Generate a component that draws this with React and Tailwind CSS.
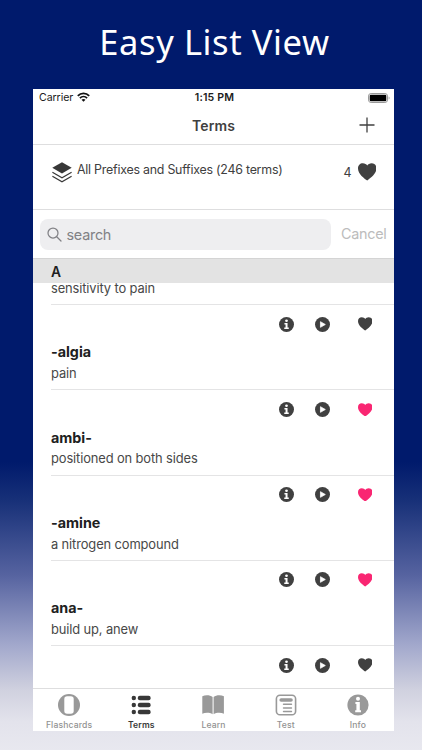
import React from "react";

const terms = [
  { term: "-algia", definition: "pain", favorite: false },
  { term: "ambi-", definition: "positioned on both sides", favorite: true },
  { term: "-amine", definition: "a nitrogen compound", favorite: true },
  { term: "ana-", definition: "build up, anew", favorite: true },
];

function Heart({ className }) {
  return (
    <svg viewBox="0 0 20 20" className={className} fill="currentColor" preserveAspectRatio="none">
      <path d="M10 20C7 17.8 0 12.5 0 6.2C0 2.6 2.2 .3 5.2 .3C7.5 .3 9 1.4 10 2.8C11 1.4 12.5 .3 14.8 .3C17.8 .3 20 2.6 20 6.2C20 12.5 13 17.8 10 20Z" />
    </svg>
  );
}

function InfoDot() {
  return (
    <svg viewBox="0 0 16 16" className="size-[15px]">
      <circle cx="8" cy="8" r="8" fill="#404040" />
      <circle cx="8" cy="4" r="1.45" fill="#fff" />
      <path d="M5.8 6.5H9.1V11.2H10.4V12.8H5.6V11.2H7V8H5.8Z" fill="#fff" />
    </svg>
  );
}

function PlayDot() {
  return (
    <svg viewBox="0 0 16 16" className="size-[15px]">
      <circle cx="8" cy="8" r="8" fill="#404040" />
      <path d="M5.8 5L11 8L5.8 11Z" fill="#fff" stroke="#fff" strokeWidth=".8" strokeLinejoin="round" />
    </svg>
  );
}

function Actions({ favorite }) {
  return (
    <div className="flex h-[38px] items-center justify-end pr-[22px]">
      <InfoDot />
      <span className="ml-[21.5px] flex"><PlayDot /></span>
      <span className={favorite ? "ml-[27.5px] flex text-[#f92672]" : "ml-[27.5px] flex text-[#404040]"}>
        <Heart className="h-[13.5px] w-[14.5px]" />
      </span>
    </div>
  );
}

function TermRow({ term, definition, favorite }) {
  return (
    <div className="ml-[18px] h-[85.25px] border-b border-[#e4e4e5]">
      <Actions favorite={favorite} />
      <div className="-mt-[0.7px] h-[20px] text-[14.3px] leading-[20px] font-bold text-[#202020]">{term}</div>
      <div className="mt-[1.8px] text-[12.9px] leading-[20px] tracking-[-0.12px] text-[#484848]">{definition}</div>
    </div>
  );
}

const tabs = [
  {
    label: "Flashcards",
    icon: (
      <>
        <circle cx="12" cy="12" r="11" fill="#999" />
        <rect x="7.3" y="3.2" width="9.4" height="17.6" rx="2.8" fill="#fff" />
      </>
    ),
  },
  {
    label: "Terms",
    active: true,
    icon: (
      <g fill="#383838">
        {[5, 12, 19].map((y) => (
          <g key={y}>
            <circle cx="4.8" cy={y} r="2.2" />
            <rect x="8.8" y={y - 2.3} width="12.8" height="4.6" rx="2" />
          </g>
        ))}
      </g>
    ),
  },
  {
    label: "Learn",
    icon: (
      <g fill="#999">
        <path d="M11.6 4.1C9 1.8 4.2 1.8 1.3 3.3V20.7C4.2 19.5 8.8 19.4 11.6 21.3Z" />
        <path d="M12.6 4.1C15.2 1.8 20 1.8 22.9 3.3V20.7C20 19.5 15.4 19.4 12.6 21.3Z" />
      </g>
    ),
  },
  {
    label: "Test",
    icon: (
      <g fill="none" stroke="#999" strokeLinecap="round">
        <rect x="2.4" y="2.2" width="19.2" height="19.6" rx="3.6" strokeWidth="1.6" />
        <path d="M7.2 7H17" strokeWidth="3.6" />
        <path d="M9.5 11.2H17.5M9.5 15H17.5M9.5 18.5H17.5" strokeWidth="1.4" />
      </g>
    ),
  },
  {
    label: "Info",
    icon: (
      <>
        <circle cx="12" cy="12" r="10.6" fill="#999" />
        <circle cx="12" cy="5.7" r="2" fill="#fff" />
        <path d="M9.4 9.1H13.8V17.3H15V19.2H9.2V17.3H10.4V10.9H9.4Z" fill="#fff" />
      </>
    ),
  },
];

export default function App() {
  return (
    <main className="flex h-[750px] w-[422px] flex-col items-center overflow-hidden bg-[linear-gradient(to_bottom,#001a6c_0px,#001a6c_462px,#173078_500px,#5663a0_575px,#a2a8cc_645px,#d0d1df_690px,#e3e3ec_722px,#e8e8ef_750px)] font-['Inter','Liberation_Sans',sans-serif]">
      <h1 className="h-[88.5px] shrink-0 pt-[18.5px] pl-[7px] font-['Noto_Sans',sans-serif] text-[34.5px] leading-[46px] font-normal tracking-[0.6px] whitespace-nowrap text-white">
        Easy List View
      </h1>

      <section className="ml-[5px] flex h-[642.5px] w-[361px] shrink-0 flex-col overflow-hidden bg-white">
        <div className="grid h-[18px] shrink-0 grid-cols-3 items-center pr-[4px] pl-[6px] text-[11px] text-[#202020]">
          <div className="flex items-center gap-[4px]">
            <span className="pt-[1px] text-[10.6px] tracking-[-0.08px]">Carrier</span>
            <svg viewBox="0 0 13 10" className="h-[10px] w-[13px]" fill="none" stroke="#111" strokeWidth="1.8">
              <path d="M.8 3.8C4 .5 9 .5 12.2 3.8M2.9 6.1C5 4.1 8 4.1 10.1 6.1" />
              <path d="M4.5 7.7C5.7 6.7 7.3 6.7 8.5 7.7L6.5 9.8Z" fill="#111" stroke="none" />
            </svg>
          </div>
          <div className="pt-[1px] text-center text-[10.6px] font-semibold tracking-[0.15px]">1:15 PM</div>
          <svg viewBox="0 0 22 10" className="h-[10px] w-[22px] justify-self-end">
            <rect x=".5" y=".5" width="19" height="9" rx="2.6" fill="none" stroke="#999" />
            <rect x="1.7" y="1.7" width="16.6" height="6.6" rx="1.2" fill="#000" />
            <path d="M20.7 3.5C21.8 4 21.8 6 20.7 6.5Z" fill="#999" />
          </svg>
        </div>

        <header className="grid h-[38px] shrink-0 grid-cols-[1fr_auto_1fr] items-center border-b border-[#dededf] pr-[19px] pl-[19px]">
          <span />
          <h2 className="text-[14px] font-semibold tracking-[0.1px] text-[#404040]">Terms</h2>
          <svg viewBox="0 0 16 16" className="size-[16px] justify-self-end" stroke="#404040" strokeWidth="1.3">
            <path d="M8 .5V15.5M.5 8H15.5" />
          </svg>
        </header>

        <div className="flex h-[65.5px] shrink-0 items-start border-b border-[#dededf] pr-[18px] pl-[19px] text-[#404040]">
          <svg viewBox="0 0 20 21" className="mt-[17.5px] h-[21px] w-[20px]">
            <path d="M10 .3L19.7 5.8L10 11.5L.3 5.8Z" fill="#383838" />
            <path d="M.4 10.3L10 15.8L19.6 10.3M.4 14.2L10 19.8L19.6 14.2" fill="none" stroke="#383838" strokeWidth="1.2" />
          </svg>
          <span className="mt-[16px] ml-[5px] text-[12.4px] leading-[18px] tracking-[-0.23px] whitespace-nowrap">All Prefixes and Suffixes (246 terms)</span>
          <span className="mt-[19px] ml-auto text-[12.5px] leading-[18px]">4</span>
          <span className="mt-[18.5px] ml-[6px]"><Heart className="h-[17.5px] w-[18.5px]" /></span>
        </div>

        <div className="flex h-[48px] shrink-0 items-center pr-[7.5px] pl-[7px]">
          <div className="flex h-[31px] w-[291px] items-center rounded-[8px] bg-[#eeeef0] pl-[7px] text-[#818185]">
            <svg viewBox="0 0 15 15" className="size-[15px]" fill="none" stroke="currentColor" strokeWidth="1.25" strokeLinecap="round">
              <circle cx="6" cy="6" r="5" />
              <path d="M9.7 9.7L14 14" />
            </svg>
            <span className="ml-[4.5px] pt-[1px] text-[14.4px] tracking-[-0.25px]">search</span>
          </div>
          <span className="ml-auto text-[14.4px] tracking-[-0.28px] text-[#bcbcbc]">Cancel</span>
        </div>

        <div className="relative z-10 h-[25px] shrink-0 border-t border-[#d4d4d4] bg-[#e3e3e3] pl-[18px] text-[13.8px] leading-[26px] font-semibold text-[#202020]">A</div>

        <div className="h-[405px] shrink-0">
          <div className="ml-[18px] h-[22px] border-b border-[#e4e4e5] text-[12.9px] leading-[12px] tracking-[-0.12px] text-[#484848]">sensitivity to pain</div>
          {terms.map((item) => <TermRow key={item.term} {...item} />)}
          <Actions favorite={false} />
        </div>

        <nav className="grid h-[43px] shrink-0 grid-cols-5 border-t border-[#dededf]">
          {tabs.map(({ label, active, icon }) => (
            <div key={label} className="flex flex-col items-center pt-[4px]">
              <svg viewBox="0 0 24 24" className="size-[24px]">{icon}</svg>
              <span className={active ? "mt-[2.5px] text-[8.6px] leading-[11px] font-semibold tracking-[0.1px] text-[#383838]" : "mt-[2.5px] text-[8.6px] leading-[11px] font-medium tracking-[0.15px] text-[#929292]"}>{label}</span>
            </div>
          ))}
        </nav>
      </section>
    </main>
  );
}
